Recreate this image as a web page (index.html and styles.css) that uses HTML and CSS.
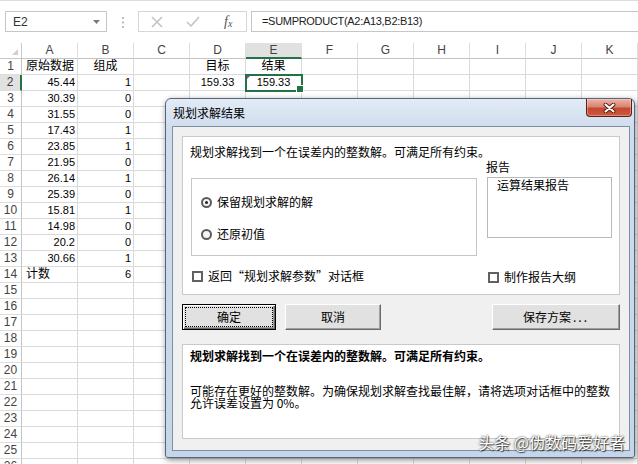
FILE: index.html
```html
<!DOCTYPE html>
<html lang="zh">
<head>
<meta charset="utf-8">
<title>规划求解结果</title>
<link rel="stylesheet" href="styles.css">
</head>
<body>
<div class="app">
  <div class="fbar">
    <div class="namebox"><span>E2</span><svg width="7" height="4" viewBox="0 0 7 4"><path d="M0 0H7L3.5 4Z" fill="#7a7a7a"/></svg></div>
    <svg class="grip" width="4" height="13" viewBox="0 0 4 13"><circle cx="2" cy="2" r="1" fill="#a8a8a8"/><circle cx="2" cy="6.5" r="1" fill="#a8a8a8"/><circle cx="2" cy="11" r="1" fill="#a8a8a8"/></svg>
    <div class="fbtns">
      <span class="fbtn"><svg width="12" height="12" viewBox="0 0 12 12"><path d="M1 1L11 11M11 1L1 11" stroke="#c4c4c4" stroke-width="1.6"/></svg></span>
      <span class="fbtn"><svg width="14" height="11" viewBox="0 0 14 11"><path d="M1 6L5 10L13 1" stroke="#c4c4c4" stroke-width="1.6" fill="none"/></svg></span>
      <span class="fbtn"><span class="fx">f<span class="fx-x">x</span></span></span>
    </div>
    <div class="finput">=SUMPRODUCT(A2:A13,B2:B13)</div>
  </div>

  <div class="grid">
    <span class="corner"><svg width="6" height="6" viewBox="0 0 6 6"><path d="M6 0V6H0Z" fill="#cfcfcf"/></svg></span><span class="ch">A</span><span class="ch">B</span><span class="ch">C</span><span class="ch">D</span><span class="ch on">E</span><span class="ch">F</span><span class="ch">G</span><span class="ch">H</span><span class="ch">I</span><span class="ch">J</span><span class="ch">K</span>
    <span class="rh">1</span><span class="tl">原始数据</span><span class="tc">组成</span><span></span><span class="tc">目标</span><span class="tc">结果</span><span></span><span></span><span></span><span></span><span></span><span></span>
    <span class="rh on">2</span><span class="num">45.44</span><span class="num">1</span><span></span><span class="nc">159.33</span><span class="nc sel">159.33</span><span></span><span></span><span></span><span></span><span></span><span></span>
    <span class="rh">3</span><span class="num">30.39</span><span class="num">0</span><span></span><span></span><span></span><span></span><span></span><span></span><span></span><span></span><span></span>
    <span class="rh">4</span><span class="num">31.55</span><span class="num">0</span><span></span><span></span><span></span><span></span><span></span><span></span><span></span><span></span><span></span>
    <span class="rh">5</span><span class="num">17.43</span><span class="num">1</span><span></span><span></span><span></span><span></span><span></span><span></span><span></span><span></span><span></span>
    <span class="rh">6</span><span class="num">23.85</span><span class="num">1</span><span></span><span></span><span></span><span></span><span></span><span></span><span></span><span></span><span></span>
    <span class="rh">7</span><span class="num">21.95</span><span class="num">0</span><span></span><span></span><span></span><span></span><span></span><span></span><span></span><span></span><span></span>
    <span class="rh">8</span><span class="num">26.14</span><span class="num">1</span><span></span><span></span><span></span><span></span><span></span><span></span><span></span><span></span><span></span>
    <span class="rh">9</span><span class="num">25.39</span><span class="num">0</span><span></span><span></span><span></span><span></span><span></span><span></span><span></span><span></span><span></span>
    <span class="rh">10</span><span class="num">15.81</span><span class="num">1</span><span></span><span></span><span></span><span></span><span></span><span></span><span></span><span></span><span></span>
    <span class="rh">11</span><span class="num">14.98</span><span class="num">0</span><span></span><span></span><span></span><span></span><span></span><span></span><span></span><span></span><span></span>
    <span class="rh">12</span><span class="num">20.2</span><span class="num">0</span><span></span><span></span><span></span><span></span><span></span><span></span><span></span><span></span><span></span>
    <span class="rh">13</span><span class="num">30.66</span><span class="num">1</span><span></span><span></span><span></span><span></span><span></span><span></span><span></span><span></span><span></span>
    <span class="rh">14</span><span class="tl">计数</span><span class="num">6</span><span></span><span></span><span></span><span></span><span></span><span></span><span></span><span></span><span></span>
    <span class="rh">15</span><span></span><span></span><span></span><span></span><span></span><span></span><span></span><span></span><span></span><span></span><span></span>
    <span class="rh">16</span><span></span><span></span><span></span><span></span><span></span><span></span><span></span><span></span><span></span><span></span><span></span>
    <span class="rh">17</span><span></span><span></span><span></span><span></span><span></span><span></span><span></span><span></span><span></span><span></span><span></span>
    <span class="rh">18</span><span></span><span></span><span></span><span></span><span></span><span></span><span></span><span></span><span></span><span></span><span></span>
    <span class="rh">19</span><span></span><span></span><span></span><span></span><span></span><span></span><span></span><span></span><span></span><span></span><span></span>
    <span class="rh">20</span><span></span><span></span><span></span><span></span><span></span><span></span><span></span><span></span><span></span><span></span><span></span>
    <span class="rh">21</span><span></span><span></span><span></span><span></span><span></span><span></span><span></span><span></span><span></span><span></span><span></span>
    <span class="rh">22</span><span></span><span></span><span></span><span></span><span></span><span></span><span></span><span></span><span></span><span></span><span></span>
    <span class="rh">23</span><span></span><span></span><span></span><span></span><span></span><span></span><span></span><span></span><span></span><span></span><span></span>
    <span class="rh">24</span><span></span><span></span><span></span><span></span><span></span><span></span><span></span><span></span><span></span><span></span><span></span>
    <span class="rh">25</span><span></span><span></span><span></span><span></span><span></span><span></span><span></span><span></span><span></span><span></span><span></span>
    <span class="rh">26</span><span></span><span></span><span></span><span></span><span></span><span></span><span></span><span></span><span></span><span></span><span></span>
  </div>

  <div class="dialog">
    <div class="titlebar">
      <span class="title">规划求解结果</span>
      <div class="close"><svg width="13" height="10" viewBox="0 0 13 10"><path d="M2.5 1.5L10.5 8.5M10.5 1.5L2.5 8.5" stroke="#4a1a12" stroke-width="3.8" stroke-linecap="round"/><path d="M2.5 1.5L10.5 8.5M10.5 1.5L2.5 8.5" stroke="#fff" stroke-width="2.1" stroke-linecap="round"/></svg></div>
    </div>
    <div class="client">
      <div class="panel top">
        <p class="msg">规划求解找到一个在误差内的整数解。可满足所有约束。</p>
        <div class="cols">
          <div class="lcol">
            <div class="group">
              <div class="opt"><span class="rb on"></span>保留规划求解的解</div>
              <div class="opt second"><span class="rb"></span>还原初值</div>
            </div>
            <div class="check lcheck"><span class="cb"></span>返回“规划求解参数”对话框</div>
          </div>
          <div class="rcol">
            <div class="rlabel">报告</div>
            <div class="listbox"><div class="item">运算结果报告</div></div>
            <div class="check rcheck"><span class="cb"></span>制作报告大纲</div>
          </div>
        </div>
      </div>
      <div class="btnrow">
        <button class="btn ok"><span class="focus">确定</span></button>
        <button class="btn cancel">取消</button>
        <button class="btn save">保存方案<span class="dots">...</span></button>
      </div>
      <div class="panel bottom">
        <p class="bold">规划求解找到一个在误差内的整数解。可满足所有约束。</p>
        <p class="desc">可能存在更好的整数解。为确保规划求解查找最佳解，请将选项对话框中的整数<br>允许误差设置为 0%。</p>
      </div>
    </div>
  </div>

  <div class="watermark">头条 @伪数码爱好者</div>
</div>
</body>
</html>
```

FILE: styles.css
```css
* { box-sizing: border-box; }
html, body { margin: 0; padding: 0; }
body { background: #fff; font-family: "Liberation Sans", "Noto Sans CJK SC", sans-serif; }

.app { position: relative; width: 638px; height: 464px; overflow: hidden; background: #fff; }

/* formula bar */
.fbar { display: flex; align-items: flex-start; height: 43px; border-top: 1px solid #dedede; padding-top: 10px; }
.namebox { margin-left: 5px; width: 102px; height: 21px; border: 1px solid #c6c6c6; display: flex; align-items: center; justify-content: space-between; padding: 0 6px 0 7px; font-size: 12px; color: #333; }
.grip { margin: 5px 0 0 14px; }
.fbtns { margin-left: 13px; width: 109px; height: 21px; border: 1px solid #d6d6d6; display: flex; }
.fbtn { flex: 1; display: flex; align-items: center; justify-content: center; }
.fx { font: italic 14px "Liberation Serif", serif; color: #555; line-height: 19px; }
.fx-x { font-size: 10px; position: relative; top: 1px; }
.finput { margin-left: 4px; flex: 1; height: 21px; border: 1px solid #c6c6c6; border-right: none; padding-left: 10px; font-size: 11px; line-height: 19px; letter-spacing: -0.3px; color: #222; white-space: nowrap; }

/* sheet grid */
.grid { display: grid; grid-template-columns: 22px repeat(11, 56px); grid-auto-rows: 16px; font-size: 11px; color: #000; }
.grid > span { border-right: 1px solid #dadada; border-bottom: 1px solid #dadada; line-height: 15px; padding: 0 3px; white-space: nowrap; overflow: hidden; }
.grid > .corner { display: flex; align-items: flex-end; justify-content: flex-end; padding: 0 3px 3px 0; border-right-color: #c8c8c8; border-bottom-color: #c8c8c8; }
.grid > .ch { text-align: center; font-size: 12px; color: #444; border-bottom-color: #c4c4c4; border-right-color: #dedede; }
.grid > .ch.on { background: #e1e1e1; border-bottom: 2px solid #217346; }
.grid > .rh { text-align: center; padding: 0; font-size: 12px; color: #444; border-right-color: #c4c4c4; border-bottom-color: #dedede; }
.grid > .rh.on { background: #e1e1e1; border-right: 2px solid #217346; }
.grid > .num { text-align: right; padding: 0 2px 0 0; }
.grid > .nc { text-align: center; padding: 0; }
.grid > .tl { font-size: 12px; padding: 0 0 0 4px; overflow: visible; }
.grid > .tc { font-size: 12px; text-align: center; padding: 0; }
.grid > .sel { position: relative; overflow: visible; outline: 2px solid #217346; outline-offset: -1px; z-index: 1; }
.grid > .sel::before { content: ""; position: absolute; left: 1px; top: 1px; border-top: 3px solid #8e44ad; border-right: 3px solid transparent; }
.grid > .sel::after { content: ""; position: absolute; right: -3px; bottom: -3px; width: 6px; height: 6px; background: #217346; border: 1px solid #fff; }

/* dialog */
.dialog { position: absolute; left: 165px; top: 98px; width: 470px; height: 360px; border: 1px solid #56657a; border-radius: 6px 6px 3px 3px; background: linear-gradient(#e2ebf6, #cfdced 30px, #c6d6ea); padding: 0 4px 6px 6px; display: flex; flex-direction: column; box-shadow: 1px 2px 6px rgba(0,0,0,.45); font-family: "Noto Sans CJK SC", "Liberation Sans", sans-serif; font-size: 12px; color: #000; z-index: 2; }
.titlebar { height: 27px; display: flex; justify-content: space-between; align-items: flex-start; }
.title { line-height: 27px; padding-left: 1px; }
.close { width: 46px; height: 18px; margin-right: -2px; border: 1px solid #5b2118; border-top: none; border-radius: 0 0 4px 4px; background: linear-gradient(#eeb1a3, #d98574 45%, #c4472f 55%, #cc5a40); display: flex; align-items: center; justify-content: center; box-shadow: inset 0 0 0 1px rgba(255,255,255,.3); }

.client { flex: 1; background: #f0f0f0; border: 1px solid #7e8ea3; padding: 9px 9px 0; display: flex; flex-direction: column; }
.panel { background: #fff; border: 1px solid #c9c9c9; }
.panel.top { height: 159px; padding: 8px 0 0 7px; flex: none; }
p { margin: 0; }
.msg { line-height: 14px; }
.cols { display: flex; }
.lcol { margin-left: 1px; width: 286px; }
.group { margin-top: 19px; height: 78px; border: 1px solid #c6c6c6; padding: 16px 0 0 9px; }
.opt { display: flex; align-items: center; height: 14px; line-height: 14px; }
.opt.second { margin-top: 18px; }
.rb { flex: none; width: 11px; height: 11px; border-radius: 50%; border: 2px solid #5c5c5c; background: #f4f4f4; margin-right: 5px; display: flex; align-items: center; justify-content: center; }
.rb.on::after { content: ""; width: 3px; height: 3px; border-radius: 50%; background: #1e1e1e; }
.check { display: flex; align-items: center; height: 14px; line-height: 14px; }
.lcheck { margin: 13px 0 0 1px; }
.cb { flex: none; width: 11px; height: 11px; border: 2px solid #616161; background: #fff; margin-right: 5px; }
.rcol { margin-left: 9px; }
.rlabel { margin-top: 1px; line-height: 14px; }
.listbox { margin: 3px 0 0 1px; width: 125px; height: 61px; border: 1px solid #b9b9b9; background: #fff; }
.item { padding-left: 9px; line-height: 14px; }
.rcheck { margin: 32px 0 0 2px; }

.btnrow { display: flex; margin-top: 9px; height: 26px; flex: none; }
.btn { height: 26px; font: 12px/14px "Noto Sans CJK SC", sans-serif; color: #000; background: #e1e1e1; border: 1px solid; border-color: #fff #6b6b6b #6b6b6b #fff; box-shadow: inset -1px -1px 0 #a0a0a0; padding: 0; display: flex; align-items: center; justify-content: center; }
.btn.ok { width: 94px; border: 1px solid #000; box-shadow: inset 1px 1px 0 #fff, inset -1px -1px 0 #6b6b6b, inset -2px -2px 0 #a0a0a0; }
.focus { flex: 1; align-self: stretch; margin: 2px; border: 1px dotted #000; display: flex; align-items: center; justify-content: center; }
.btn.cancel { width: 96px; margin-left: 9px; }
.btn.save { width: 128px; margin-left: auto; }
.dots { letter-spacing: 2px; margin-left: 2px; }

.panel.bottom { margin-top: 14px; height: 95px; padding: 4px 0 0 7px; flex: none; }
.bold { font-weight: bold; line-height: 14px; }
.desc { margin-top: 22px; line-height: 12px; white-space: nowrap; }

.watermark { position: absolute; right: 13px; top: 432px; z-index: 3; font: 16px/20px "Noto Sans CJK SC", sans-serif; color: #fff; text-shadow: 0 0 2px rgba(0,0,0,.9), 1px 1px 1px rgba(0,0,0,.6); white-space: nowrap; }
```
